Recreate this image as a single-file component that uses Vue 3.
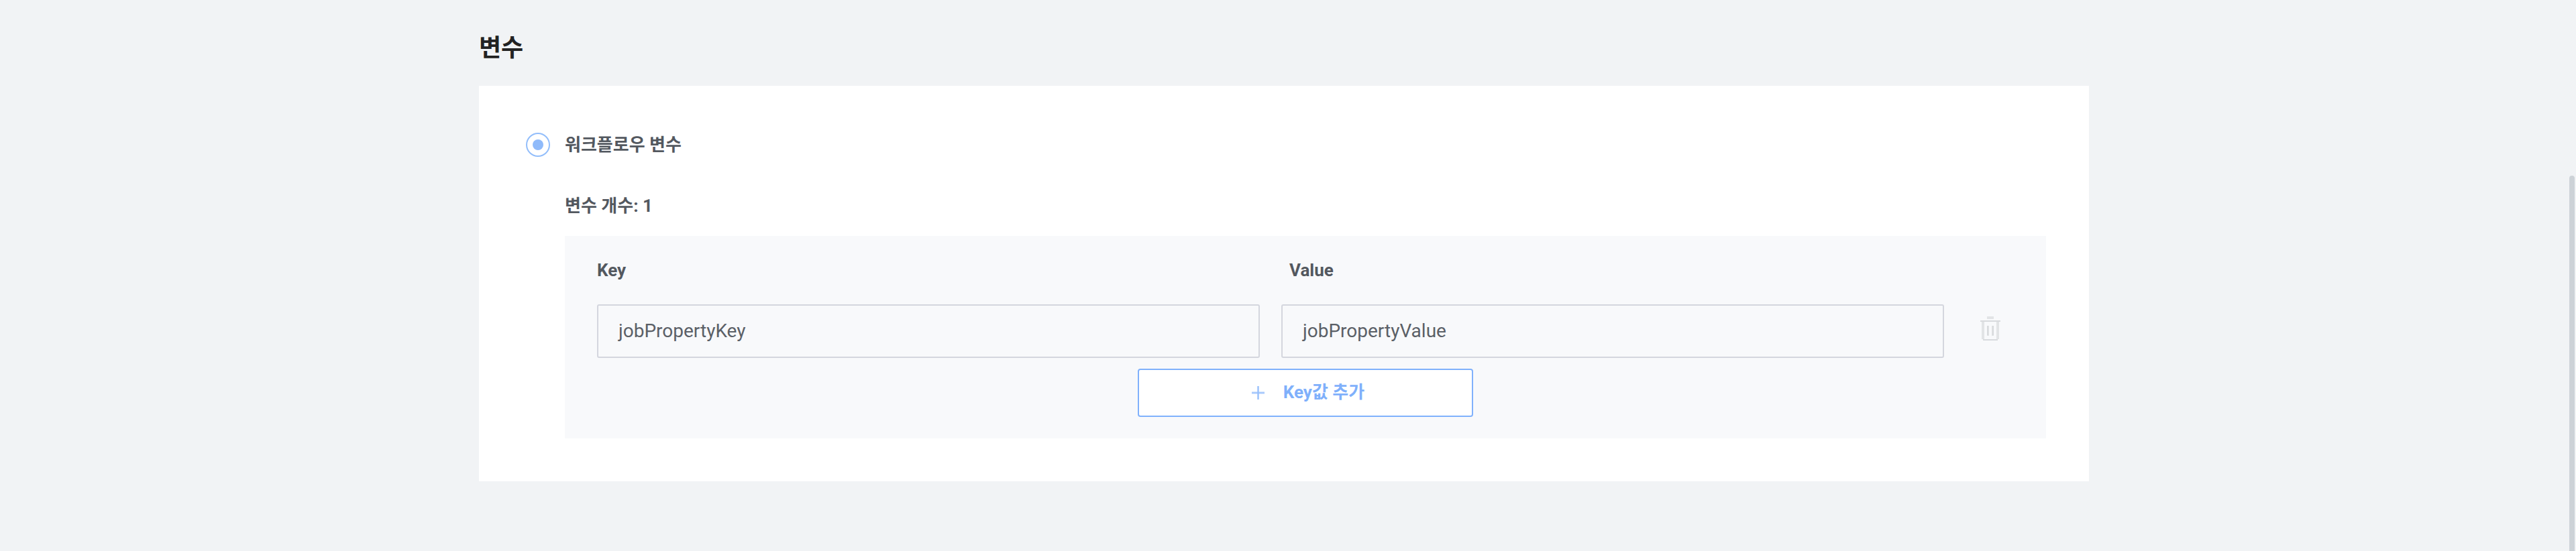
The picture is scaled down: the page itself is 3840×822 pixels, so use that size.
<script setup>
import { ref } from 'vue'

const rows = ref([{ key: 'jobPropertyKey', value: 'jobPropertyValue' }])
</script>

<template>
  <div class="page">
    <main class="content">
      <h2 class="title">변수</h2>
      <section class="card">
        <div class="option">
          <span class="radio"><span class="dot"></span></span>
          <span class="label">워크플로우 변수</span>
        </div>
        <div class="body">
          <p class="label count">변수 개수: {{ rows.length }}</p>
          <div class="panel">
            <div class="heads">
              <span class="label">Key</span>
              <span class="label">Value</span>
            </div>
            <div v-for="row in rows" :key="row.key" class="row">
              <div class="field">{{ row.key }}</div>
              <div class="field">{{ row.value }}</div>
              <svg class="trash" width="30" height="36" viewBox="0 0 30 36" shape-rendering="crispEdges">
                <g fill="#e2e4e6">
                  <rect x="10" y="0" width="10" height="4" />
                  <rect x="2" y="8" width="4" height="26" />
                  <rect x="24" y="8" width="4" height="26" />
                  <rect x="10" y="14" width="3" height="15" />
                  <rect x="17" y="14" width="3" height="15" />
                </g>
                <g fill="#d8dadd">
                  <rect x="0" y="6" width="30" height="2" />
                  <rect x="4" y="34" width="22" height="2" />
                  <rect x="10" y="14" width="2" height="14" />
                  <rect x="18" y="14" width="2" height="14" />
                </g>
              </svg>
            </div>
            <button class="add" type="button">
              <svg width="20" height="20" viewBox="0 0 20 20">
                <path d="M0 10H19" stroke="#a9cafc" stroke-width="3" />
                <path d="M9.5 0V20" stroke="#98c0fc" stroke-width="2.4" />
              </svg>
              <span class="add-text">Key값 추가</span>
            </button>
          </div>
        </div>
      </section>
    </main>
    <div class="scrollbar"></div>
  </div>
</template>

<style>
body {
  background: #f1f3f5;
}
</style>

<style scoped>
.page {
  display: flex;
  height: 822px;
  overflow: hidden;
  background: #f1f3f5;
  font-family: Roboto, "Noto Sans CJK KR", sans-serif;
  color: #53585f;
}
.content {
  width: 2400px;
  margin-left: 714px;
}
.title {
  height: 128px;
  box-sizing: border-box;
  margin: 0;
  padding-top: 46px;
  font-size: 36px;
  line-height: 52px;
  font-weight: 700;
  color: #222;
}
.card {
  height: 590px;
  box-sizing: border-box;
  padding: 68px 64px 64px 70px;
  background: #fff;
}
.option {
  display: flex;
  align-items: center;
  height: 40px;
  gap: 22px;
}
.radio {
  display: flex;
  align-items: center;
  justify-content: center;
  width: 36px;
  height: 36px;
  box-sizing: border-box;
  border: 2.5px solid #93befb;
  border-radius: 50%;
}
.dot {
  width: 16px;
  height: 16px;
  border-radius: 50%;
  background: #8fbafa;
}
.label {
  font-size: 26px;
  line-height: 38px;
  font-weight: 700;
}
.body {
  margin-left: 58px;
}
.count {
  margin: 0;
  padding: 52px 0 26px;
}
.panel {
  height: 302px;
  box-sizing: border-box;
  padding: 32px 48px 0;
  background: #f8f9fb;
}
.heads {
  display: grid;
  grid-template-columns: 1032px 1fr;
  height: 70px;
}
.row {
  display: flex;
  height: 80px;
}
.field {
  width: 988px;
  height: 80px;
  box-sizing: border-box;
  margin-right: 32px;
  padding-left: 30px;
  border: 2px solid #d4d6de;
  border-radius: 3px;
  font-size: 28px;
  line-height: 76px;
  color: #5b6067;
}
.trash {
  margin: 18px 0 0 22px;
}
.add {
  display: flex;
  align-items: center;
  justify-content: center;
  gap: 27px;
  width: 500px;
  height: 72px;
  box-sizing: border-box;
  margin: 16px auto 0;
  padding: 0 0 0 8px;
  border: 2px solid #80b1fc;
  border-radius: 4px;
  background: #fff;
  font: 700 26px/38px Roboto, "Noto Sans CJK KR", sans-serif;
  color: #7fb0fb;
}
.add-text {
  margin-bottom: 2px;
}
.scrollbar {
  width: 8px;
  height: 560px;
  margin: 262px 2px 0 auto;
  border-radius: 4px 4px 0 0;
  background: #cdd2d7;
}
</style>
